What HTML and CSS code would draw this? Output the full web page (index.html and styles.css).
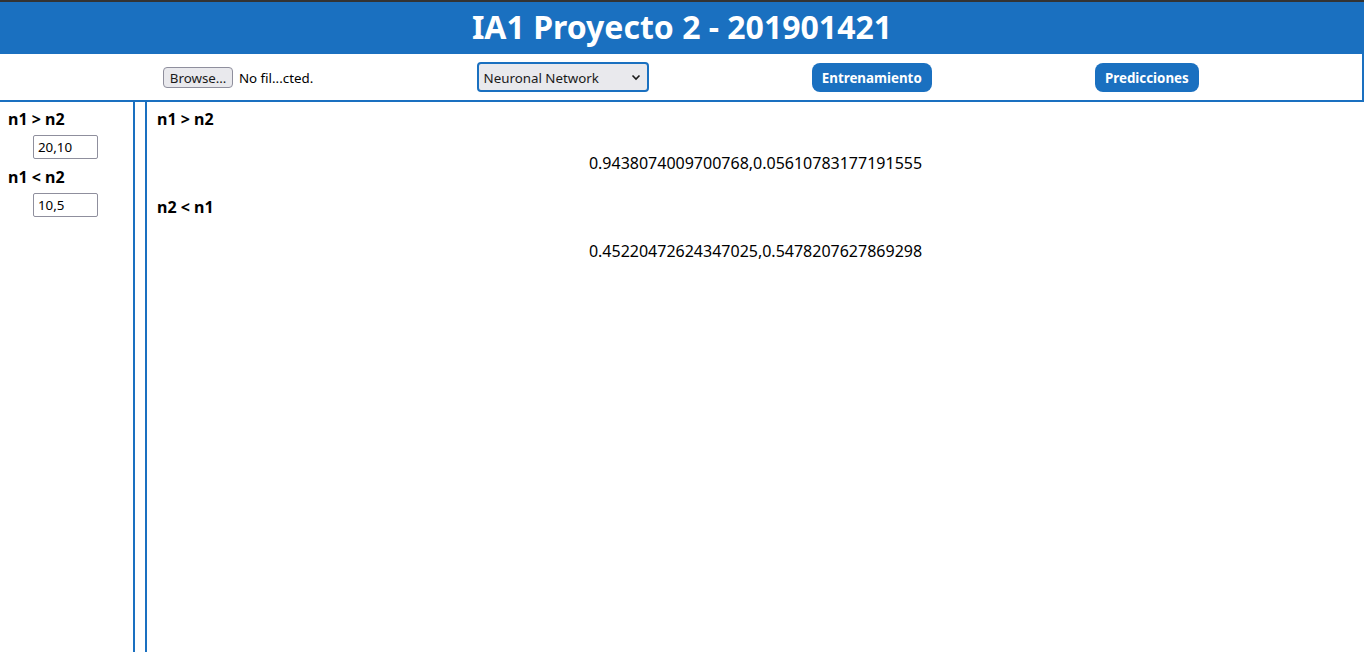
FILE: index.html
```html
<!DOCTYPE html>
<html lang="es">
<head>
<meta charset="utf-8">
<title>IA1 Proyecto 2</title>
<link rel="stylesheet" href="styles.css">
</head>
<body>
<header class="header">
  <h1 class="title">IA1 Proyecto 2 - 201901421</h1>
</header>
<nav class="toolbar">
  <div class="file-input">
    <span class="file-btn">Browse…</span>
    <span class="file-name">No fil...cted.</span>
  </div>
  <div class="select">
    <span class="select-text">Neuronal Network</span>
    <svg class="chevron" width="10" height="7" viewBox="0 0 10 7"><path d="M1.5 1.5 L5 5 L8.5 1.5" fill="none" stroke="#1a1a1a" stroke-width="1.6"/></svg>
  </div>
  <button class="btn">Entrenamiento</button>
  <button class="btn">Predicciones</button>
</nav>
<div class="layout">
  <aside class="sidebar">
    <div class="field">
      <div class="label">n1 &gt; n2</div>
      <input class="input" type="text" value="20,10">
    </div>
    <div class="field">
      <div class="label">n1 &lt; n2</div>
      <input class="input" type="text" value="10,5">
    </div>
  </aside>
  <main class="main">
    <div class="label">n1 &gt; n2</div>
    <p class="result">0.9438074009700768,0.05610783177191555</p>
    <div class="label">n2 &lt; n1</div>
    <p class="result">0.45220472624347025,0.5478207627869298</p>
  </main>
</div>
</body>
</html>
```
FILE: styles.css
```css
* { box-sizing: border-box; }
html, body { height: 100%; }
body {
  margin: 0;
  font-family: "Noto Sans", "Open Sans", sans-serif;
  color: #000;
  background: #fff;
  display: flex;
  flex-direction: column;
  overflow: hidden;
}
.header {
  border-top: 2px solid #333;
  background: #1a70c0;
  height: 54px;
  display: flex;
  align-items: center;
  justify-content: center;
  padding-bottom: 2px;
}
.title {
  margin: 0;
  color: #fff;
  font-size: 32px;
  font-weight: 700;
  line-height: 40px;
}
.toolbar {
  height: 48px;
  border-right: 2px solid #1a70c0;
  border-bottom: 2px solid #1a70c0;
  display: flex;
  align-items: center;
  justify-content: space-evenly;
  width: 1364px;
}
.file-input {
  display: flex;
  align-items: center;
  gap: 6px;
  font-size: 13.33px;
  width: 150px;
}
.file-btn {
  height: 21px;
  width: 70px;
  border: 1px solid #8f8f9d;
  border-radius: 4px;
  background: #e9e9ed;
  display: flex;
  align-items: center;
  justify-content: center;
  color: #1a1a1a;
  padding-top: 1px;
}
.file-name { white-space: nowrap; padding-top: 1px; }
.select {
  width: 172px;
  height: 30px;
  border: 2px solid #1a70c0;
  border-radius: 4px;
  background: #e9e9ed;
  display: flex;
  align-items: center;
  justify-content: space-between;
  padding: 1px 6px 0 5px;
  font-size: 13.33px;
  color: #1a1a1a;
}
.chevron { display: block; }
.btn {
  height: 29px;
  border: none;
  border-radius: 8px;
  background: #1a70c0;
  color: #fff;
  font-family: inherit;
  font-weight: 700;
  font-size: 13.33px;
  padding: 1px 10px 0;
}
.layout {
  flex: 1;
  display: flex;
  gap: 10px;
  min-height: 0;
}
.sidebar {
  width: 135px;
  border-right: 2px solid #1a70c0;
  padding: 6px 0 0 8px;
}
.field { margin-bottom: 7px; }
.label {
  font-weight: 700;
  font-size: 16px;
  line-height: 22px;
}
.input {
  display: block;
  margin: 5px 0 0 25px;
  width: 65px;
  height: 24px;
  border: 1px solid #8f8f9d;
  border-radius: 2px;
  font-family: inherit;
  font-size: 13.33px;
  padding: 0 4px;
  color: #000;
}
.main {
  flex: 1;
  border-left: 2px solid #1a70c0;
  padding: 6px 0 0 10px;
}
.main .label { margin-bottom: 22px; }
.result {
  margin: 0 0 22px;
  text-align: center;
  font-size: 16px;
  line-height: 22px;
  padding-right: 10px;
}
```
